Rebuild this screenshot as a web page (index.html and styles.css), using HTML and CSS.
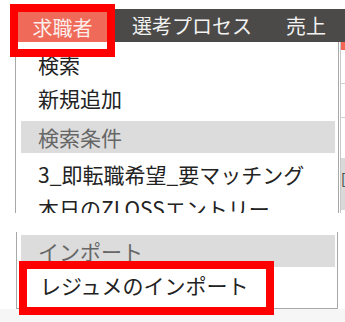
FILE: index.html
```html
<!DOCTYPE html>
<html>
<head>
    <meta charset="utf-8">
    <link rel="stylesheet" href="styles.css">
</head>
<body>
    <!-- top shot: nav + open dropdown -->
    <div class="shot shot-top">
        <nav class="nav">
            <div class="tab active">
                <span class="tab-label">求職者</span>
                <span class="tab-underline"></span>
            </div>
            <div class="tab">選考プロセス</div>
            <div class="tab">売上</div>
        </nav>
        <div class="drop-row">
            <div class="menu menu-cut">
                <div class="item">検索</div>
                <div class="item">新規追加</div>
                <div class="group">検索条件</div>
                <div class="item">3_即転職希望_要マッチング</div>
                <div class="item">本日のZLOSSエントリー</div>
            </div>
            <div class="peek">
                <div class="peek-head"></div>
                <div class="peek-line"></div>
                <div class="peek-line"></div>
                <div class="peek-gray">[</div>
            </div>
        </div>
    </div>

    <!-- bottom shot: end of the same dropdown -->
    <div class="shot shot-bottom">
        <div class="menu menu-end">
            <div class="group">インポート</div>
            <div class="item highlight">レジュメのインポート</div>
        </div>
        <div class="below"></div>
    </div>
</body>
</html>
```

FILE: styles.css
```css
* {
    margin: 0;
    padding: 0;
    box-sizing: border-box;
}

html, body {
    width: 100%;
    height: 100%;
    overflow: hidden;
    background: #fff;
}

body {
    font-family: "Noto Sans CJK JP", "Noto Sans", sans-serif;
    font-size: 21px;
    color: #222;
}

.shot-top {
    height: 213px;
    overflow: hidden;
}

.nav {
    display: flex;
    align-items: center;
    height: 33px;
    margin: 9px 0 0 10px;
    background: #4b4a48;
    color: #f2f2f2;
    font-size: 20px;
}

.tab {
    padding: 0 17px;
    white-space: nowrap;
}

.tab.active {
    position: relative;
    z-index: 2;
    align-self: flex-start;
    display: flex;
    flex-direction: column;
    width: 105px;
    height: 53px;
    margin-top: -5px;
    padding: 0;
    border: 8px solid #ff0000;
}

.tab-label {
    display: flex;
    align-items: center;
    justify-content: center;
    height: 30px;
    background: #f06a5a;
    color: #fbeeea;
}

.tab-underline {
    height: 7px;
    background: #fff;
}

.drop-row {
    display: flex;
}

.menu {
    background: #fff;
    border-left: 1px solid #a8a8a8;
    border-right: 1px solid #a8a8a8;
}

.menu-cut {
    width: 324px;
    height: 171px;
    margin-left: 15px;
    padding-top: 5px;
    overflow: hidden;
}

.item {
    display: flex;
    align-items: center;
    height: 34px;
    padding-left: 22px;
    white-space: nowrap;
}

.group {
    display: flex;
    align-items: center;
    height: 32px;
    margin: 6px 3px 4px 5px;
    padding-left: 17px;
    background: #dcdcdc;
    color: #666;
}

.peek {
    display: flex;
    flex-direction: column;
    width: 5px;
    margin-left: 1px;
    border-left: 1px solid #c8c8c8;
}

.peek-head {
    height: 8px;
    background: #f26656;
}

.peek-line {
    height: 34px;
    border-bottom: 1px solid #d0d0d0;
}

.peek-gray {
    height: 52px;
    margin-top: 40px;
    background: #d9d9d9;
    font-size: 14px;
    line-height: 40px;
    color: #333;
}

.shot-bottom {
    margin-top: 19px;
}

.menu-end {
    width: 322px;
    margin-left: 16px;
    padding-top: 3px;
    border-bottom: 1px solid #a8a8a8;
}

.menu-end .group {
    margin: 0 2px 0 4px;
}

.item.highlight {
    position: relative;
    width: 255px;
    height: 54px;
    margin: -6px 0 -7px 2px;
    padding: 0 0 6px 13px;
    border: 8px solid #ff0000;
    background: #fff;
}

.below {
    height: 13px;
    background: #f6f6f6;
}
```
